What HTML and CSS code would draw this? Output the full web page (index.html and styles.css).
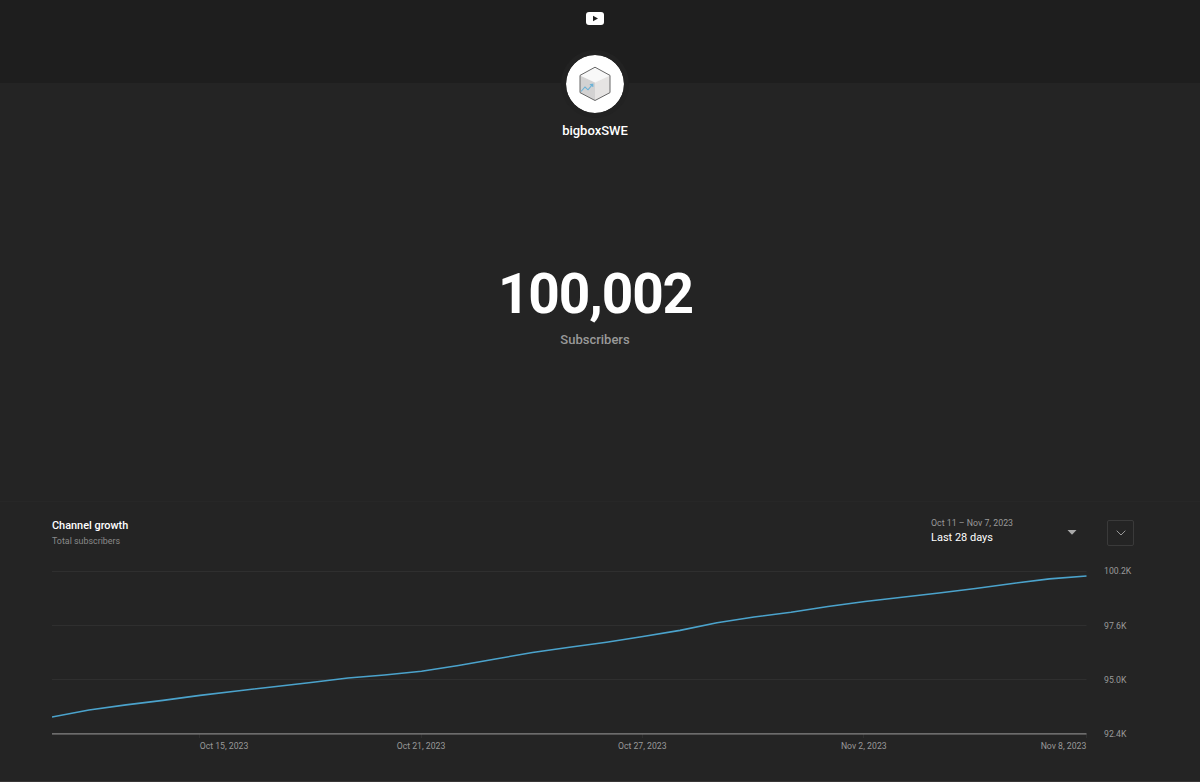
FILE: index.html
```
<!DOCTYPE html>
<html lang="en">
<head>
  <meta charset="UTF-8">
  <meta name="viewport" content="width=device-width, initial-scale=1.0">
  <title>bigboxSWE - Live subscriber count</title>
  <link rel="stylesheet" href="styles.css">
</head>
<body>
  <header class="banner">
    <svg class="yt-logo" width="18" height="13" viewBox="0 0 18 13">
      <rect width="18" height="13" rx="3" fill="#fff"/>
      <path d="M7 3.7v5.6l5-2.8z" fill="#1e1e1e"/>
    </svg>
  </header>

  <main class="channel">
    <div class="avatar">
      <svg width="32" height="36" viewBox="0 0 32 36">
        <path d="M16 1.2 31 9.4 16 16.5 1 9.4z" fill="#f8f8f8"/>
        <path d="M1 9.4 16 16.5V34.5L1 26.6z" fill="#d3d2d2"/>
        <path d="M31 9.4 16 16.5V34.5l15-7.9z" fill="#e6e4e3"/>
        <path d="M16 1.2 31 9.4v17.2l-15 7.9L1 26.6V9.4z" fill="none" stroke="#666" stroke-width="1"/>
        <path d="M2 25.5 6 21l3 2.8 4.6-5.5M10.8 18.8l3-.7v3" fill="none" stroke="#6cb2d6" stroke-width="1.1"/>
      </svg>
    </div>
    <div class="channel-name">bigboxSWE</div>
    <div class="count">100,002</div>
    <div class="count-label">Subscribers</div>
  </main>

  <section class="growth">
    <div class="growth-header">
      <div class="growth-title">
        <h2>Channel growth</h2>
        <p>Total subscribers</p>
      </div>
      <div class="period">
        <div>
          <div class="period-range">Oct 11 – Nov 7, 2023</div>
          <div class="period-name">Last 28 days</div>
        </div>
        <svg width="10" height="5" viewBox="0 0 10 5"><path d="M.5 0h9L5 4.7z" fill="#aaa"/></svg>
      </div>
      <button class="collapse-btn" aria-label="Collapse">
        <svg width="10" height="6" viewBox="0 0 10 6"><path d="M.7.7 5 5 9.3.7" fill="none" stroke="#999" stroke-width="1"/></svg>
      </button>
    </div>

    <svg class="chart" width="1100" height="200" viewBox="0 0 1100 200">
      <g class="grid">
        <path d="M0 11.5H1034.5"/>
        <path d="M0 65.5H1034.5"/>
        <path d="M0 119.5H1034.5"/>
      </g>
      <path class="ticks" d="M147.5 174v4M369.5 174v4M590.5 174v4M811.5 174v4M1034.5 174v4"/>
      <path class="axis" d="M0 173.8H1034.5"/>
      <polyline class="line" points="0,157 37,150 74,144.9 111,140.4 148,135.4 185,131 222,126.7 259,122.5 296,118 332.5,115 369.5,111.3 406.5,105.5 443.5,99 480.5,92.5 517.5,87.2 554.5,82.2 591,76.5 628,70.4 665,62.8 702,57 739,52.3 776,46.5 813,41.5 850,37.3 887,33 923.5,28.5 960.5,23.5 997.5,18.9 1034.5,16"/>
      <g class="labels">
        <text x="1052" y="14.3">100.2K</text>
        <text x="1052" y="68.6">97.6K</text>
        <text x="1052" y="122.6">95.0K</text>
        <text x="1052" y="176.8">92.4K</text>
      </g>
      <g class="labels dates">
        <text x="172" y="188.8">Oct 15, 2023</text>
        <text x="369" y="188.8">Oct 21, 2023</text>
        <text x="590.3" y="188.8">Oct 27, 2023</text>
        <text x="811.8" y="188.8">Nov 2, 2023</text>
        <text x="1011.5" y="188.8">Nov 8, 2023</text>
      </g>
    </svg>
  </section>
</body>
</html>
```
FILE: styles.css
```
* {
  box-sizing: border-box;
}
body {
  margin: 0;
  height: 782px;
  display: flex;
  flex-direction: column;
  overflow: hidden;
  background-color: #242424;
  border-bottom: 1px solid #393737;
  color: #fff;
  font-family: Roboto, sans-serif;
}
h2, p {
  margin: 0;
}
.banner {
  height: 83px;
  flex-shrink: 0;
  display: flex;
  justify-content: center;
  background-color: #1e1e1e;
  padding-top: 12px;
  padding-right: 10px;
}
.channel {
  height: 418px;
  flex-shrink: 0;
  display: flex;
  flex-direction: column;
  align-items: center;
  padding-right: 10px;
}
.avatar {
  width: 68px;
  height: 68px;
  flex-shrink: 0;
  margin-top: -33px;
  display: flex;
  align-items: center;
  justify-content: center;
  background-color: #fff;
  background-clip: padding-box;
  border: 5px solid #222;
  border-radius: 50%;
}
.channel-name {
  margin-top: 5px;
  font-size: 13px;
  line-height: 16px;
  font-weight: 500;
}
.count {
  margin-top: 125px;
  padding-left: 1px;
  font-size: 55px;
  line-height: 60px;
  font-weight: 700;
  letter-spacing: -1.1px;
}
.count-label {
  margin-top: 8px;
  color: #999;
  font-size: 13px;
  line-height: 16px;
  font-weight: 500;
}
.growth {
  flex: 1;
  padding: 16px 0 0 52px;
  border-top: 1px solid #272727;
}
.growth-header {
  display: flex;
  width: 1082px;
  height: 42px;
}
.growth-title {
  flex: 1;
  padding-top: 1px;
}
.growth-title h2 {
  font-size: 10.9px;
  line-height: 14px;
  font-weight: 500;
  margin-bottom: 2px;
}
.growth-title p {
  color: #8a8a8a;
  font-size: 8.9px;
  line-height: 13px;
}
.period {
  display: flex;
  justify-content: space-between;
  align-items: center;
  width: 146px;
  height: 28px;
  margin-right: 30px;
}
.period-range {
  color: #999;
  font-size: 8.8px;
  line-height: 12px;
}
.period-name {
  font-size: 11px;
  line-height: 18px;
}
.collapse-btn {
  display: flex;
  align-items: center;
  justify-content: center;
  width: 27px;
  height: 26px;
  margin-top: 2px;
  padding: 0;
  background: none;
  border: 1px solid #3a3a3a;
  border-radius: 2px;
}
.chart {
  display: block;
}
.grid {
  stroke: #2f2f2f;
}
.ticks {
  fill: none;
  stroke: #2f2f2f;
}
.axis {
  stroke: #858484;
  stroke-width: 1.2;
}
.line {
  fill: none;
  stroke: #4ba3cc;
  stroke-width: 1.6;
  stroke-linejoin: round;
}
.labels {
  fill: #999;
  font-size: 8.7px;
}
.dates {
  text-anchor: middle;
}
```
